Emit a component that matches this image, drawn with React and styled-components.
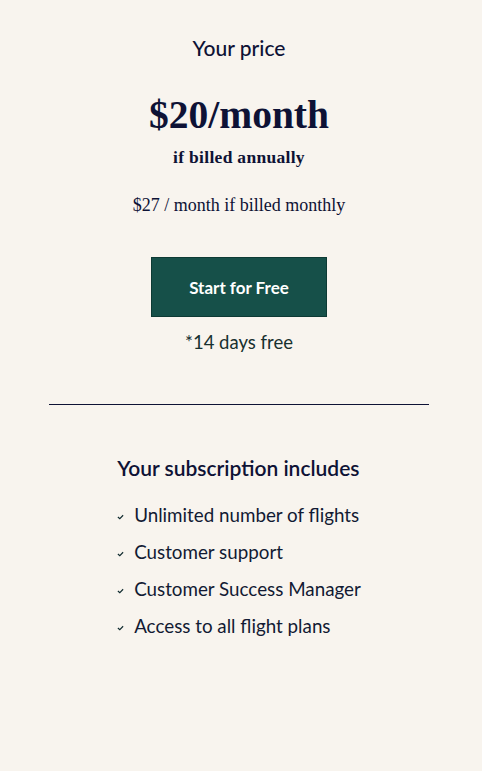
import styled, { createGlobalStyle } from "styled-components"

const features = [
    "Unlimited number of flights",
    "Customer support",
    "Customer Success Manager",
    "Access to all flight plans",
]

export default function App() {
    return (
        <>
            <Global />
            <Page>
                <Price>
                    <Label>Your price</Label>
                    <Amount>$20/month</Amount>
                    <Annual>if billed annually</Annual>
                    <Monthly>$27 / month if billed monthly</Monthly>
                    <StartButton>Start for Free</StartButton>
                    <Trial>*14 days free</Trial>
                </Price>
                <Divider />
                <Includes>
                    <IncludesTitle>Your subscription includes</IncludesTitle>
                    <List>
                        {features.map((f) => (
                            <Item key={f}>
                                <Check viewBox="0 0 8 6">
                                    <path d="M1 3 L3.2 5 L7 1" fill="none" stroke="#0f2a2e" strokeWidth="1.3" />
                                </Check>
                                {f}
                            </Item>
                        ))}
                    </List>
                </Includes>
            </Page>
        </>
    )
}

const Global = createGlobalStyle`
body {
    margin: 0;
    background: #f8f4ee;
}
`
const Page = styled.div`
width: 482px;
height: 771px;
background: #f8f4ee;
display: flex;
flex-direction: column;
align-items: center;
padding: 36px 4px 0 0;
box-sizing: border-box;
color: #0e1235;
`
const Price = styled.div`
display: flex;
flex-direction: column;
align-items: center;
`
const Label = styled.div`
font-family: Lato, sans-serif;
font-size: 21px;
font-weight: 500;
line-height: 24px;
`
const Amount = styled.div`
font-family: "Liberation Serif", serif;
font-weight: 700;
font-size: 39.5px;
line-height: 44px;
margin-top: 33px;
`
const Annual = styled.div`
font-family: "Liberation Serif", serif;
font-weight: 700;
font-size: 17.5px;
letter-spacing: 0.3px;
line-height: 20px;
margin-top: 10px;
`
const Monthly = styled.div`
font-family: "Liberation Serif", serif;
font-size: 18px;
line-height: 22px;
margin-top: 27px;
`
const StartButton = styled.button`
width: 176px;
height: 60px;
margin-top: 41px;
background: #165049;
border: 1px solid #0d3a34;
color: #ffffff;
font-family: Lato, sans-serif;
font-weight: 700;
font-size: 17px;
cursor: pointer;
`
const Trial = styled.div`
font-family: Lato, sans-serif;
font-size: 18.5px;
line-height: 22px;
color: #17302f;
margin-top: 14px;
`
const Divider = styled.hr`
width: 380px;
margin: 51px 0 0 0;
border: none;
border-top: 1px solid #0e1235;
`
const Includes = styled.div`
display: flex;
flex-direction: column;
align-items: flex-start;
margin-top: 50px;
`
const IncludesTitle = styled.div`
font-family: Lato, sans-serif;
font-size: 21px;
font-weight: 600;
line-height: 26px;
`
const List = styled.ul`
list-style: none;
margin: 22px 0 0 0;
padding: 0;
display: flex;
flex-direction: column;
gap: 13px;
`
const Item = styled.li`
display: flex;
align-items: center;
gap: 10px;
font-family: Lato, sans-serif;
font-size: 18.8px;
line-height: 24px;
color: #121a33;
`
const Check = styled.svg`
width: 7px;
height: 6px;
margin-top: 4px;
`
